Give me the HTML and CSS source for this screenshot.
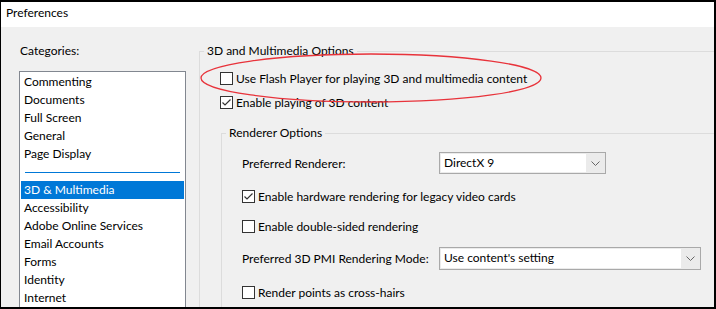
FILE: index.html
```html
<!DOCTYPE html>
<html lang="en">
<head>
    <meta charset="UTF-8">
    <title>Preferences</title>
    <link rel="stylesheet" href="styles.css">
</head>
<body>
    <div class="window">
        <div class="titlebar">Preferences</div>

        <div class="content">
            <div class="sidebar">
                <div class="sidebar-label">Categories:</div>
                <ul class="listbox">
                    <li>Commenting</li>
                    <li>Documents</li>
                    <li>Full Screen</li>
                    <li>General</li>
                    <li>Page Display</li>
                    <li class="separator"><span></span></li>
                    <li class="selected">3D &amp; Multimedia</li>
                    <li>Accessibility</li>
                    <li>Adobe Online Services</li>
                    <li>Email Accounts</li>
                    <li>Forms</li>
                    <li>Identity</li>
                    <li>Internet</li>
                </ul>
            </div>

            <div class="panel">
                <div class="group">
                    <div class="group-title">3D and Multimedia Options</div>

                    <label class="check-row row-flash">
                        <span class="checkbox"></span>
                        Use Flash Player for playing 3D and multimedia content
                    </label>
                    <label class="check-row row-enable">
                        <span class="checkbox checked">
                            <svg width="11" height="11" viewBox="0 0 11 11"><path d="M1.5 5.5 L4 8 L9.5 2.5" fill="none" stroke="#333" stroke-width="1.2"/></svg>
                        </span>
                        Enable playing of 3D content
                    </label>

                    <div class="group inner-group">
                        <div class="group-title">Renderer Options</div>

                        <div class="field-row row-renderer">
                            <span class="field-label">Preferred Renderer:</span>
                            <div class="combo combo-short">
                                <span class="combo-value">DirectX 9</span>
                                <span class="combo-arrow">
                                    <svg width="9" height="5" viewBox="0 0 9 5"><path d="M0.5 0.5 L4.5 4.5 L8.5 0.5" fill="none" stroke="#666" stroke-width="1"/></svg>
                                </span>
                            </div>
                        </div>

                        <label class="check-row row-hw">
                            <span class="checkbox checked">
                                <svg width="11" height="11" viewBox="0 0 11 11"><path d="M1.5 5.5 L4 8 L9.5 2.5" fill="none" stroke="#333" stroke-width="1.2"/></svg>
                            </span>
                            Enable hardware rendering for legacy video cards
                        </label>
                        <label class="check-row row-double">
                            <span class="checkbox"></span>
                            Enable double-sided rendering
                        </label>

                        <div class="field-row row-pmi">
                            <span class="field-label">Preferred 3D PMI Rendering Mode:</span>
                            <div class="combo combo-long">
                                <span class="combo-value">Use content's setting</span>
                                <span class="combo-arrow">
                                    <svg width="9" height="5" viewBox="0 0 9 5"><path d="M0.5 0.5 L4.5 4.5 L8.5 0.5" fill="none" stroke="#666" stroke-width="1"/></svg>
                                </span>
                            </div>
                        </div>

                        <label class="check-row row-points">
                            <span class="checkbox"></span>
                            Render points as cross-hairs
                        </label>
                    </div>
                </div>
            </div>
        </div>

        <!-- red annotation drawn over the dialog -->
        <svg class="annotation" width="716" height="309" viewBox="0 0 716 309">
            <ellipse cx="371" cy="78" rx="170" ry="24" fill="none" stroke="#e8333b" stroke-width="1.3"/>
        </svg>
    </div>
</body>
</html>
```

FILE: styles.css
```css
* {
    margin: 0;
    padding: 0;
    box-sizing: border-box;
}

body {
    font-family: 'Segoe UI', 'Lato', 'Noto Sans', sans-serif;
    font-size: 12px;
    color: #000;
    background: #fff;
}

.window {
    position: relative;
    width: 716px;
    height: 309px;
    border: 2px solid #000;
    border-left-width: 1px;
    background: #f0f0f0;
    overflow: hidden;
    display: flex;
    flex-direction: column;
}

.titlebar {
    height: 25px;
    background: #fff;
    padding: 3px 0 0 5px;
    line-height: 16px;
}

.content {
    flex: 1;
    display: flex;
    min-height: 0;
}

/* left column */

.sidebar {
    width: 198px;
    flex: none;
    padding: 16px 0 0 18px;
    display: flex;
    flex-direction: column;
}

.sidebar-label {
    line-height: 16px;
    padding-left: 1px;
}

.listbox {
    list-style: none;
    margin-top: 12px;
    width: 167px;
    flex: 1;
    background: #fff;
    border: 1px solid #828790;
    border-bottom: none;
    padding: 1px 1px 0;
    overflow: hidden;
}

.listbox li {
    height: 18px;
    line-height: 18px;
    padding-left: 3px;
    white-space: nowrap;
}

.listbox li.selected {
    background: #0078d7;
    color: #fff;
}

.listbox li.separator {
    display: flex;
    align-items: center;
    padding: 0 4px 0 4px;
}

.listbox li.separator span {
    flex: 1;
    height: 1px;
    background: #0078d7;
}

/* right panel */

.panel {
    flex: 1;
    padding-top: 24px;
}

.group {
    border-top: 1px solid #dcdcdc;
    border-left: 1px solid #dcdcdc;
    padding-left: 20px;
    height: 100%;
}

.group-title {
    width: fit-content;
    height: 16px;
    line-height: 16px;
    margin: -9px 0 0 -16px;
    padding: 0 3px;
    background: #f0f0f0;
}

.inner-group {
    margin: 24px 0 0 1px;
}

.check-row {
    display: flex;
    align-items: center;
    gap: 3px;
    height: 13px;
    line-height: 13px;
    white-space: nowrap;
}

.checkbox {
    width: 13px;
    height: 13px;
    flex: none;
    border: 1px solid #333;
    background: #fff;
    display: flex;
    align-items: center;
    justify-content: center;
}

.row-flash { margin-top: 13px; }
.row-enable { margin-top: 11px; }
.row-hw { margin-top: 16px; }
.row-double { margin-top: 17px; }
.row-points { margin-top: 16px; }

.field-row {
    display: flex;
    align-items: center;
}

.row-renderer { margin-top: 11px; }
.row-pmi { margin-top: 14px; }

.field-label {
    width: 197px;
    flex: none;
}

.combo {
    display: flex;
    height: 22px;
    border: 1px solid #a9a9a9;
    background: #ebebeb;
    padding: 1px 0 1px 1px;
}

.combo-short { width: 167px; }
.combo-long { width: 262px; height: 23px; }

.combo-value {
    flex: 1;
    background: #fff;
    padding-left: 3px;
    line-height: 18px;
    white-space: nowrap;
}

.combo-arrow {
    width: 19px;
    flex: none;
    display: flex;
    align-items: center;
    justify-content: center;
}

.annotation {
    position: absolute;
    left: -1px;
    top: -2px;
    pointer-events: none;
}
```
